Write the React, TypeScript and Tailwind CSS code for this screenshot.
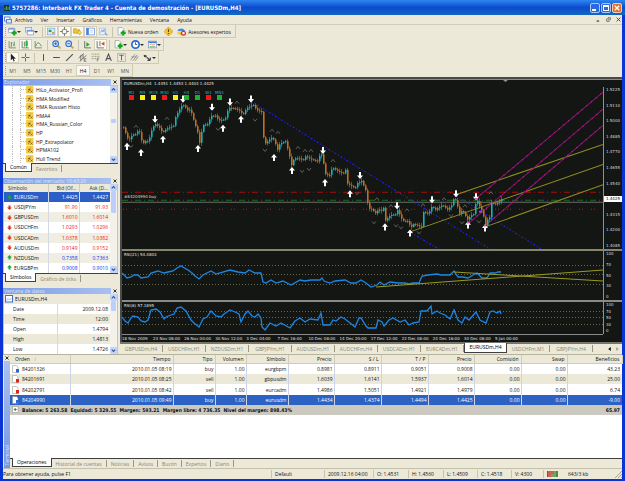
import React from "react";
import type { ReactNode } from "react";

type Pt = [number, number];

/* ---------- chart data ---------- */

const PRICE: Pt[] = [
  [122, 127], [125, 134], [128, 141], [131, 135], [134, 132], [139, 133], [142, 144], [145, 140], [149, 139], [152, 128],
  [155, 124], [160, 127], [163, 133], [166, 129], [173, 124], [177, 114], [182, 104], [186, 107], [191, 114], [194, 123],
  [197, 131], [199, 141], [203, 126], [207, 124], [210, 116], [212, 113], [218, 121], [224, 118], [229, 109], [235, 108],
  [239, 109], [242, 117], [246, 108], [251, 104], [256, 111], [262, 111], [263, 136], [266, 144], [270, 139], [272, 137],
  [275, 143], [277, 148], [281, 144], [285, 141], [288, 151], [291, 163], [295, 159], [298, 158], [305, 158], [310, 159],
  [317, 159], [322, 154], [324, 173], [328, 174], [333, 169], [338, 171], [345, 171], [347, 184], [353, 186], [358, 184],
  [361, 181], [365, 189], [367, 201], [370, 209], [375, 213], [378, 208], [383, 209], [385, 221], [390, 214], [397, 211],
  [402, 220], [407, 219], [410, 229], [413, 224], [421, 224], [422, 213], [428, 213], [432, 203], [435, 211], [442, 204],
  [450, 209], [453, 199], [456, 199], [458, 211], [463, 213], [467, 219], [470, 214], [474, 211], [476, 199], [479, 206],
  [482, 211], [485, 223], [489, 218], [491, 203], [495, 203], [499, 199], [502, 201],
];

const RSI_SLOW: Pt[] = [
  [122, 273], [127, 278], [131, 277], [134, 275], [138, 275], [141, 278], [148, 277], [151, 273], [158, 271], [164, 273],
  [168, 272], [173, 271], [177, 268], [181, 266], [188, 270], [192, 273], [195, 276], [199, 279], [203, 275], [211, 271],
  [216, 274], [230, 270], [238, 272], [245, 273], [249, 270], [255, 273], [261, 273], [263, 282], [266, 283], [271, 280],
  [276, 283], [283, 281], [291, 285], [300, 280], [305, 281], [311, 280], [320, 280], [322, 278], [324, 281], [330, 283],
  [335, 281], [345, 280], [351, 283], [356, 283], [361, 280], [366, 283], [371, 287], [377, 285], [380, 282], [384, 285],
  [390, 282], [398, 283], [405, 283], [409, 284], [413, 283], [419, 283], [422, 276], [428, 275], [437, 274], [441, 275],
  [450, 275], [454, 271], [458, 277], [463, 277], [468, 278], [473, 275], [477, 273], [482, 278], [487, 278], [490, 273],
  [495, 273], [498, 272], [501, 272],
];

const RSI_FAST: Pt[] = [
  [122, 317], [125, 321], [128, 323], [131, 318], [133, 316], [138, 317], [141, 321], [145, 322], [148, 320], [151, 310],
  [156, 309], [160, 312], [164, 319], [166, 317], [171, 315], [174, 314], [177, 308], [181, 307], [186, 311], [191, 320],
  [194, 323], [199, 327], [203, 319], [207, 317], [211, 311], [216, 316], [221, 317], [224, 314], [230, 310], [235, 312],
  [239, 314], [241, 322], [245, 314], [248, 311], [252, 316], [255, 317], [258, 314], [261, 318], [262, 327], [265, 330],
  [270, 323], [276, 326], [281, 323], [290, 328], [295, 321], [300, 318], [305, 322], [310, 319], [318, 320], [321, 313],
  [323, 325], [330, 325], [333, 320], [336, 321], [341, 317], [345, 319], [350, 323], [355, 327], [359, 318], [361, 318],
  [366, 326], [368, 328], [376, 328], [378, 320], [382, 322], [384, 326], [389, 320], [393, 318], [400, 322], [405, 320],
  [409, 325], [413, 323], [419, 322], [421, 311], [427, 311], [431, 306], [432, 314], [437, 311], [440, 313], [445, 315],
  [450, 319], [454, 310], [458, 320], [462, 323], [465, 317], [469, 320], [476, 312], [480, 320], [486, 323], [490, 312],
  [493, 311], [497, 313], [500, 311], [501, 314],
];

const DOWN_ARROWS: Pt[] = [[155, 119], [183, 99], [212, 107], [230, 102], [251, 99], [323, 150], [360, 175], [397, 205], [432, 199], [456, 193], [476, 196]];
const UP_ARROWS: Pt[] = [[127, 146], [141, 152], [163, 139], [198, 148], [223, 128], [241, 119], [274, 157], [292, 170], [325, 182], [350, 193], [385, 226], [410, 232], [468, 224], [485, 227]];
const PEAKS: Pt[] = [[136, 126], [167, 118], [237, 102], [272, 130], [278, 132], [298, 147], [305, 150], [311, 150], [333, 160], [377, 198], [391, 205], [407, 209], [423, 204], [444, 198], [465, 205], [491, 192]];
const TROUGHS: Pt[] = [[131, 146], [218, 129], [255, 120], [265, 150], [302, 171], [309, 169], [357, 193], [374, 222], [396, 225], [401, 227], [419, 232], [451, 215], [462, 222], [479, 221]];

const PRICE_LABELS = ["1.5225", "1.5110", "1.5000", "1.4885", "1.4770", "1.4655", "1.4540", "1.4425", "1.4315", "1.4200", "1.4085"];
const RSI_LABELS = ["100", "70", "50", "30", "0"];
const TIMES = ["18 Nov 2009", "23 Nov 08:00", "26 Nov 00:00", "30 Nov 12:00", "3 Dec 04:00", "7 Dec 16:00", "10 Dec 08:00", "14 Dec 20:00", "17 Dec 12:00", "22 Dec 08:00", "24 Dec 16:00", "30 Dec 08:00", "5 Jan 00:00"];

function valueAt(points: Pt[], x: number): number {
  for (let i = 1; i < points.length; i++) {
    const [x0, y0] = points[i - 1];
    const [x1, y1] = points[i];
    if (x <= x1) return y0 + ((y1 - y0) * (x - x0)) / (x1 - x0);
  }
  return points[points.length - 1][1];
}

function Candles() {
  const bars: ReactNode[] = [];
  let open = valueAt(PRICE, 122);
  for (let i = 0; i < 190; i++) {
    const x = 123 + i * 2;
    if (x > 502) break;
    const noise = ((i * 7919) % 13) / 13 - 0.5;
    const close = valueAt(PRICE, x) + noise * 4;
    const color = close <= open ? "#14b4ba" : "#c0701e";
    const top = Math.min(open, close);
    const bottom = Math.max(open, close);
    const reach = 1 + ((i * 31) % 5) / 2;
    bars.push(
      <g key={x} fill={color}>
        <rect x={x} y={top - reach} width="1" height={bottom - top + reach * 2} opacity="0.6" />
        <rect x={x} y={top} width="1.6" height={Math.max(1, bottom - top)} />
      </g>,
    );
    open = close;
  }
  return <>{bars}</>;
}

const toPoints = (points: Pt[]) => points.map((p) => p.join(",")).join(" ");

const SIGNALS: [string, string][] = [
  ["M1", "#f01818"], ["M5", "#f8f010"], ["M15", "#f8f010"], ["M30", "#f01818"], ["H1", "#f8f010"],
  ["H4", "#20b030"], ["D1", "#20b030"], ["W1", "#f01818"], ["MN1", "#20b030"],
];

function PricePlot() {
  return (
    <svg viewBox="122 80 481 168" preserveAspectRatio="none" className="block h-full w-full" aria-label="EURUSDm H4">
      <path d="M122 191.500H603" stroke="#a80c0c" strokeDasharray="6 3 1 3" />
      <path d="M122 199.500H603" stroke="#1d6a24" strokeDasharray="6 3 1 3" />
      <path d="M122 201.500H603" stroke="#6c6c6c" />
      <path d="M123 208.500H603" stroke="#d01010" strokeWidth="1.200" strokeDasharray="1 2 1 8" />
      <g stroke="#2020e8" strokeWidth="1.200" strokeDasharray="2 2 1 2" fill="none">
        <path d="M251 101L490 248" />
        <path d="M411 232L439 248" />
        <path d="M456 195L541 248" />
      </g>
      <g stroke="#8f8f20" fill="none">
        <path d="M456 194L603 144" />
        <path d="M410 231L603 164" />
        <path d="M485 226L603 184" />
      </g>
      <g stroke="#8c1278" fill="none">
        <path d="M476 198L603 92" />
        <path d="M468 223L603 109" />
        <path d="M485 225L603 125" />
      </g>
      <g stroke="#d82090" strokeDasharray="1 5" fill="none">
        <path d="M476 198L603 92" />
        <path d="M468 223L603 109" />
        <path d="M485 225L603 125" />
      </g>
      <Candles />
      <g fill="none" stroke="#6f6f72" strokeWidth="0.8">
        {PEAKS.map(([x, y]) => <path key={x} d={`M${x - 2} ${y + 1.5}L${x} ${y - 1}L${x + 2} ${y + 1.5}`} />)}
        {TROUGHS.map(([x, y]) => <path key={x} d={`M${x - 2} ${y - 1.5}L${x} ${y + 1}L${x + 2} ${y - 1.5}`} />)}
      </g>
      <g fill="#ffffff">
        {DOWN_ARROWS.map(([x, y]) => <path key={x} d={`M${x - 1} ${y - 3.5}h2v3.500h2l-3 3.500l-3 -3.500h2z`} />)}
        {UP_ARROWS.map(([x, y]) => <path key={x} d={`M${x - 1} ${y + 3.5}h2v-3.500h2l-3 -3.500l-3 3.500h2z`} />)}
      </g>
      <g fill="#e040d0">
        <circle cx="468" cy="222" r="1" /><circle cx="485" cy="225" r="1" /><circle cx="476" cy="198" r="1" /><circle cx="480" cy="211" r="1" />
      </g>
      <path d="M503 80h5l-2.500 2z" fill="#8d93a5" />
    </svg>
  );
}

function RsiPlot({ box, levels, points, children }: { box: string; levels: number[]; points: Pt[]; children?: ReactNode }) {
  return (
    <svg viewBox={box} preserveAspectRatio="none" className="block h-full w-full">
      {levels.map((y) => <path key={y} d={`M122 ${y}.5H603`} stroke="#66664a" strokeDasharray="1 2" />)}
      <polyline points={toPoints(points)} fill="none" stroke="#1c86e4" strokeWidth="1.300" />
      {children}
    </svg>
  );
}

function Scale({ labels, current }: { labels: string[]; current?: string }) {
  return (
    <div className="flex h-full w-[19px] flex-col justify-between border-l border-[#8a90a0] text-[4px] leading-[6px] text-[#d8d8d8]">
      {labels.map((l) => (
        <span key={l} className={l === current ? "bg-white pl-[2px] text-black" : "pl-[2px]"}>{l}</span>
      ))}
    </div>
  );
}

function Chart() {
  return (
    <div className="flex min-h-0 flex-1 flex-col border-t-2 border-l-2 border-[#4a4a4a] bg-[#141613] font-['DejaVu_Sans',sans-serif]">
      <div className="flex min-h-0 flex-1">
        <div className="relative min-w-0 flex-1 border-t border-[#8a8a8a]">
          <PricePlot />
          <div className="absolute top-0 left-[2px] text-[4px] leading-[7px] whitespace-pre text-[#e4e4e4]">EURUSDm,H4  1.4451 1.4453 1.4403 1.4425</div>
          <div className="absolute top-[10px] left-[4px] flex">
            {SIGNALS.map(([name, color]) => (
              <div key={name} className="flex w-[11px] flex-col items-center text-[4px] leading-[5px] text-[#18b8c0]">
                {name}
                <span className="size-[5px]" style={{ backgroundColor: color }} />
              </div>
            ))}
          </div>
          <div className="absolute top-[114px] left-[2px] text-[4px] leading-[6px] text-[#dcdcdc]">#84204990 buy</div>
        </div>
        <div className="border-t border-[#8a8a8a] pt-[7px]"><Scale labels={PRICE_LABELS} current="1.4425" /></div>
      </div>
      <div className="flex h-[51px] border-t-2 border-[#86866e]">
        <div className="relative min-w-0 flex-1">
          <RsiPlot box="122 251 481 49" levels={[265, 274, 284]} points={RSI_SLOW}>
            <g stroke="#9a9a22" fill="none">
              <path d="M376 287L603 270" />
              <path d="M454 272L603 281" />
            </g>
          </RsiPlot>
          <div className="absolute top-[1px] left-[2px] text-[4px] leading-[6px] text-[#e4e4e4]">RSI(21) 54.4803</div>
        </div>
        <Scale labels={RSI_LABELS} />
      </div>
      <div className="flex h-[34px] border-t-2 border-[#8a8a8a]">
        <div className="relative min-w-0 flex-1">
          <RsiPlot box="122 302 481 32" levels={[311, 317, 324]} points={RSI_FAST} />
          <div className="absolute top-[1px] left-[2px] text-[4px] leading-[6px] text-[#e4e4e4]">RSI(6) 57.1895</div>
        </div>
        <Scale labels={RSI_LABELS} />
      </div>
      <div className="mr-[19px] h-[8px] border-t border-[#8a8a8a]">
        <div className="grid w-[84%] grid-cols-13 text-[4px] leading-[7px] text-[#e0e0e0]">
          {TIMES.map((t) => <span key={t} className="overflow-visible whitespace-nowrap">{t}</span>)}
        </div>
      </div>
    </div>
  );
}

/* ---------- icons ---------- */

type IconName =
  | "newChart" | "profiles" | "market" | "target" | "navigator" | "terminal" | "tester" | "order" | "meta" | "expert"
  | "bars" | "candles" | "line" | "zoomIn" | "zoomOut" | "scroll" | "shift" | "indicators" | "clock" | "template"
  | "cursor" | "cross" | "vline" | "hline" | "trend" | "channel" | "fibo" | "text" | "label" | "pitch" | "objects";

const ICONS: Record<IconName, ReactNode> = {
  newChart: <><rect x="1" y="2" width="11" height="8" rx="1" fill="#fff" stroke="#5a83c8" /><path d="M1 3.500h11" stroke="#5a83c8" strokeWidth="2" /><path d="M11 6v9M6.500 10.500h9" stroke="#16a820" strokeWidth="4" /></>,
  profiles: <><rect x="1" y="1" width="11" height="8" fill="#dfe9fa" stroke="#6a90d0" /><rect x="4" y="6" width="11" height="8" fill="#fff" stroke="#5a83c8" /><path d="M4 7h11" stroke="#5a83c8" strokeWidth="2" /></>,
  market: <><rect x="1" y="2" width="13" height="12" fill="#d9e9fb" stroke="#5a94d8" /><path d="M3 5h5v4H3z" fill="#28a838" /><path d="M9 9h4v3H9z" fill="#d89030" /></>,
  target: <><circle cx="8" cy="8" r="4.500" fill="none" stroke="#70706c" strokeWidth="1.500" /><path d="M8 0v5M8 11v5M0 8h5M11 8h5" stroke="#70706c" strokeWidth="1.500" /></>,
  navigator: <><path d="M1 3h5l2 2h4v6H1z" fill="#f4c430" stroke="#b88a18" /><path d="M8 9l3-3 4 4-3 4z" fill="#f9dd58" stroke="#b88a18" /></>,
  terminal: <><rect x="1" y="2" width="14" height="12" fill="#fff" stroke="#3a6cc8" /><rect x="1" y="2" width="4" height="12" fill="#4a80d8" /><path d="M7 6h6M7 9h6" stroke="#a8b8d8" /></>,
  tester: <><rect x="1" y="2" width="11" height="11" fill="#eef3fc" stroke="#9ab0d8" /><path d="M3 10l2-5 2 4 2-5 2 5" fill="none" stroke="#4a78c8" /><path d="M10 10l5 5" stroke="#8a98b8" strokeWidth="2" /></>,
  order: <><path d="M2 1h7l3 3v10H2z" fill="#fff" stroke="#7a8aa8" /><path d="M11 6v9M6.500 10.500h9" stroke="#16a820" strokeWidth="4" /></>,
  meta: <><path d="M8 0l8 8-8 8-8-8z" fill="#f6c62c" stroke="#b8861a" /><path d="M8 4v5M8 10.500v2" stroke="#6a4c08" strokeWidth="2" /></>,
  expert: <><path d="M1 7c0-6 13-6 13 0z" fill="#4a88e0" /><path d="M1 8h12v4l-6 3-6-3z" fill="#f2c848" /><circle cx="11.500" cy="11" r="4.500" fill="#e02818" /><rect x="9.500" y="9" width="4" height="4" fill="#fff" /></>,
  bars: <><path d="M2 2v12h12" fill="none" stroke="#78786c" strokeWidth="1.500" /><path d="M6 4v8M6 5h2M11 3v8M9 9h2" stroke="#3c8c48" strokeWidth="1.500" /></>,
  candles: <><path d="M2 2v12h12M6 3v9" fill="none" stroke="#58785c" strokeWidth="1.500" /><path d="M10 0v14" stroke="#188828" /><rect x="8" y="2" width="4" height="9" fill="#20b838" /></>,
  line: <><path d="M2 2v12h12" fill="none" stroke="#78786c" strokeWidth="1.500" /><path d="M3 11c3-8 6-8 10 0" fill="none" stroke="#3c8c48" strokeWidth="1.500" /></>,
  zoomIn: <><path d="M9 9l6 6" stroke="#d8a030" strokeWidth="3" /><circle cx="6.500" cy="6.500" r="5" fill="#d6e8fc" stroke="#3470d0" strokeWidth="2" /><path d="M4 6.500h5M6.500 4v5" stroke="#2058c0" strokeWidth="1.500" /></>,
  zoomOut: <><path d="M9 9l6 6" stroke="#d8a030" strokeWidth="3" /><circle cx="6.500" cy="6.500" r="5" fill="#d6e8fc" stroke="#3470d0" strokeWidth="2" /><path d="M4 6.500h5" stroke="#2058c0" strokeWidth="1.500" /></>,
  scroll: <><path d="M3 2v12h11" fill="none" stroke="#60605a" strokeWidth="1.500" /><path d="M6 4l6 4-6 4z" fill="#20a838" /></>,
  shift: <><path d="M2 2v12h12M7 2v9" fill="none" stroke="#60605a" strokeWidth="1.500" /><path d="M15 3v7L9 6.500z" fill="#c84830" /></>,
  indicators: <><path d="M2 1h7l3 3v10H2z" fill="#fff" stroke="#6a8a78" /><path d="M11 6v9M6.500 10.500h9" stroke="#16a820" strokeWidth="4" /></>,
  clock: <><circle cx="8" cy="8" r="6.500" fill="#fff" stroke="#2468d8" strokeWidth="3" /><path d="M8 4v4h3" fill="none" stroke="#30486c" strokeWidth="1.500" /></>,
  template: <><rect x="1" y="2" width="14" height="12" fill="#fff" stroke="#4a80d0" /><path d="M1 4h14" stroke="#4a80d0" strokeWidth="3" /><path d="M3 9l3-2 3 2 4-2" fill="none" stroke="#c04838" /><path d="M3 12h10" stroke="#48a058" strokeWidth="1.500" /></>,
  cursor: <path d="M5 1v12l3-3 2 5 2-1-2-4h4z" fill="#202020" />,
  cross: <path d="M8 1v6M8 9v6M1 8h6M9 8h6" stroke="#505050" strokeWidth="1.500" />,
  vline: <path d="M8 2v12" stroke="#505050" strokeWidth="1.800" />,
  hline: <path d="M2 8h12" stroke="#505050" strokeWidth="1.800" />,
  trend: <path d="M2 14L14 2" stroke="#505050" strokeWidth="1.800" />,
  channel: <><path d="M1 9l9-8M3 15L15 4M5 4v9M9 2v8" stroke="#505050" strokeWidth="1.300" /><path d="M11 10h4M11 10v5M11 12.500h3M11 15h4" fill="none" stroke="#505050" /></>,
  fibo: <><path d="M1 2h14M1 6h14M1 10h8" stroke="#80805c" strokeWidth="1.300" strokeDasharray="2 1" /><path d="M11 9h4M11 9v6M11 12h3" stroke="#505050" /></>,
  text: <path d="M3 14L8 2l5 12M5 10h6" fill="none" stroke="#505050" strokeWidth="2" />,
  label: <><rect x="1" y="1" width="14" height="14" fill="none" stroke="#707068" strokeDasharray="2 1" /><path d="M4 4h8M8 4v9" stroke="#505050" strokeWidth="1.500" /></>,
  pitch: <path d="M1 13L9 2M5 14l8-11M9 14l6-8M2 7h10" stroke="#80807c" strokeWidth="1.300" />,
  objects: <><path d="M1 3l5 1 1 4-5-1z" fill="#404040" /><path d="M7 8l6 5M13 13h-5M13 13V8" stroke="#404040" strokeWidth="2" fill="none" /></>,
};

function Icon({ name }: { name: IconName }) {
  return <svg viewBox="0 0 16 16" className="size-[9px] shrink-0" aria-hidden="true">{ICONS[name]}</svg>;
}

function Tool({ name, on, menu, label }: { name: IconName; on?: boolean; menu?: boolean; label?: string }) {
  return (
    <button
      type="button"
      aria-label={label ?? name}
      className={`flex h-[11px] shrink-0 items-center px-[1px] whitespace-nowrap ${on ? "border border-[#d4d0bc] bg-[#faf9f4]" : "border border-transparent"}`}
    >
      <Icon name={name} />
      {label && <span className="px-[2px]">{label}</span>}
      {menu && <span className="size-0 border-x-2 border-t-2 border-x-transparent border-t-[#303030]" />}
    </button>
  );
}

function Divider() {
  return <span className="mx-[2px] h-[10px] w-px shrink-0 bg-[#c8c4b0]" />;
}

function ToolBar({ children }: { children: ReactNode }) {
  return (
    <div className="flex h-[13px] w-max shrink-0 items-center border-r border-b border-[#cfcab2] pt-px pl-[2px]">
      <span className="h-[9px] border-l border-dotted border-[#a8a48c]" />
      {children}
    </div>
  );
}

/* ---------- side panels ---------- */

function PanelTitle({ children }: { children: ReactNode }) {
  return (
    <div className="flex h-[7px] items-center">
      <div className="h-[6px] min-w-0 flex-1 overflow-hidden bg-linear-to-r from-[#7c9ce4] to-[#a9c0f0] pl-px leading-[6px] whitespace-nowrap text-[#dfe8fb]">{children}</div>
      <button type="button" aria-label="Cerrar" className="flex h-[6px] w-[7px] items-center justify-center">
        <svg viewBox="0 0 8 8" className="size-[4px]"><path d="M1 1l6 6M7 1L1 7" stroke="#202020" strokeWidth="1.800" /></svg>
      </button>
    </div>
  );
}

function ScrollBar({ thumb }: { thumb: string }) {
  return (
    <div className="flex w-[7px] shrink-0 flex-col bg-[#f3f1ea]">
      <Arrow d="M2 5l2-2 2 2" />
      <div className={`mx-px rounded-[1px] bg-[#bccffa] ${thumb}`} />
      <div className="flex-1" />
      <Arrow d="M2 3l2 2 2-2" />
    </div>
  );
}

function Arrow({ d }: { d: string }) {
  return (
    <svg viewBox="0 0 8 8" className="h-[7px] w-[7px] shrink-0 rounded-[1px] bg-[#c3d4fb]">
      <path d={d} fill="none" stroke="#3a5590" strokeWidth="1.300" />
    </svg>
  );
}

function Tabs({ names }: { names: string[] }) {
  return (
    <div role="tablist" className="flex h-[10px] shrink-0 items-start border-t border-[#404040] pl-[2px]">
      {names.map((n, i) => (
        <button
          key={n}
          type="button"
          role="tab"
          aria-selected={i === 0}
          className={i === 0
            ? "-mt-px h-[9px] border-x border-b border-[#404040] bg-white px-[4px] leading-[8px] text-black"
            : "mt-px h-[7px] border-r border-[#9a9680] px-[4px] leading-[6px] text-[#8a8674]"}
        >
          {n}
        </button>
      ))}
    </div>
  );
}

const INDICATORS = ["HiLo_Activator_Profi", "HMA Modified", "HMA Russian Histo", "HMA4", "HMA_Russian_Color", "HP", "HP_Extrapolator", "HPMA102", "Hull Trend"];

function Navigator() {
  return (
    <section className="flex min-h-0 flex-1 flex-col">
      <PanelTitle>Explorador</PanelTitle>
      <div className="flex min-h-0 flex-1 border border-b-0 border-[#c8c4b4] bg-white">
        <ul className="grid min-w-0 flex-1 auto-rows-fr pl-[8px]">
          {INDICATORS.map((n) => (
            <li key={n} className="flex items-center border-l border-dotted border-[#c0c0b8] pl-[7px]">
              <span className="h-full w-[6px] border-l border-dotted border-[#c0c0b8]">
                <span className="block h-1/2 border-b border-dotted border-[#c0c0b8]" />
              </span>
              <svg viewBox="0 0 16 16" className="mr-[2px] size-[8px] shrink-0">
                <rect x="0" y="0" width="15" height="15" rx="2" fill="#f2cc48" />
                <path d="M4 12c3 0 2-8 5-8M4 7h5M9 9l4 4M13 9l-4 4" fill="none" stroke="#7a5c10" strokeWidth="1.500" />
              </svg>
              <span className="whitespace-nowrap">{n}</span>
            </li>
          ))}
        </ul>
        <ScrollBar thumb="mt-[26px] h-[4px]" />
      </div>
      <Tabs names={["Común", "Favoritos"]} />
    </section>
  );
}

const QUOTES: [string, string, string, boolean][] = [
  ["EURUSDm", "1.4425", "1.4427", true], ["USDJPYm", "91.90", "91.93", false], ["GBPUSDm", "1.6010", "1.6014", false],
  ["USDCHFm", "1.0293", "1.0296", false], ["USDCADm", "1.0378", "1.0382", false], ["AUDUSDm", "0.9149", "0.9152", false],
  ["NZDUSDm", "0.7358", "0.7363", true], ["EURGBPm", "0.9008", "0.9010", true],
];

function MarketWatch() {
  return (
    <section className="flex h-[106px] shrink-0 flex-col">
      <PanelTitle>Observación del mercado: 10:43:26</PanelTitle>
      <div className="flex min-h-0 flex-1 border-x border-[#c8c4b4] bg-white">
        <table className="h-full min-w-0 flex-1 table-fixed border-collapse">
          <colgroup><col className="w-[44px]" /><col className="w-[31px]" /><col className="w-[31px]" /></colgroup>
          <thead>
            <tr className="bg-[#ece9d8] text-[#303030]">
              <th className="border-r border-[#cfccba] p-0 pl-[4px] text-left font-normal">Símbolo</th>
              <th className="border-r border-[#cfccba] p-0 pr-[2px] text-right font-normal whitespace-nowrap">Bid (Of…</th>
              <th className="p-0 pr-[2px] text-right font-normal whitespace-nowrap">Ask (D…</th>
            </tr>
          </thead>
          <tbody>
            {QUOTES.map(([s, bid, ask, up], i) => {
              const tone = i === 0 ? "text-white" : up ? "text-[#1030f0]" : "text-[#f02010]";
              return (
                <tr key={s} className={i === 0 ? "bg-[#2b5fc6] text-white" : i % 2 ? "bg-white" : "bg-[#f0eee2]"}>
                  <td className="border-r border-[#d4d8e4] p-0">
                    <span className="flex items-center gap-[2px] pl-[3px]">
                      <svg viewBox="0 0 10 10" className="size-[5px] shrink-0"><path d={up ? "M5 0l5 5H7v4H3V5H0z" : "M5 10l5-5H7V1H3v4H0z"} fill={up ? "#18a838" : "#d83418"} /></svg>
                      {s}
                    </span>
                  </td>
                  <td className={`border-r border-[#d4d8e4] p-0 pr-px text-right ${tone}`}>{bid}</td>
                  <td className={`p-0 pr-[2px] text-right ${tone}`}>{ask}</td>
                </tr>
              );
            })}
          </tbody>
        </table>
        <ScrollBar thumb="h-[22px]" />
      </div>
      <Tabs names={["Símbolos", "Gráfico de ticks"]} />
    </section>
  );
}

const DATA: [string, string][] = [["Date", "2009.12.08"], ["Time", "12:00"], ["Open", "1.4794"], ["High", "1.4813"], ["Low", "1.4726"]];

function DataWindow() {
  return (
    <section className="flex h-[67px] shrink-0 flex-col">
      <PanelTitle>Ventana de datos</PanelTitle>
      <div className="flex min-h-0 flex-1 border-x border-[#c8c4b4] bg-white">
        <div className="flex min-w-0 flex-1 flex-col">
          <div className="flex h-[10px] items-center gap-[2px] bg-[#ece9d8] pl-px">
            <svg viewBox="0 0 16 16" className="size-[8px]"><rect x="1" y="1" width="14" height="13" fill="#fff" stroke="#3a70d0" strokeWidth="2" /><path d="M3 11l3-4 3 3 4-4" fill="none" stroke="#3a70d0" /></svg>
            EURUSDm,H4
          </div>
          <table className="w-full flex-1 table-fixed border-collapse">
            <tbody>
              {DATA.map(([k, v], i) => (
                <tr key={k} className={i % 2 ? "bg-[#ece9d8]" : "bg-white"}>
                  <th className="border-r border-[#d4d8e4] p-0 pl-[9px] text-left font-normal">{k}</th>
                  <td className="p-0 pr-[2px] text-right">{v}</td>
                </tr>
              ))}
            </tbody>
          </table>
        </div>
        <ScrollBar thumb="h-[10px]" />
      </div>
    </section>
  );
}

/* ---------- chart tabs and terminal ---------- */

const CHARTS = ["GBPUSDm,H4", "USDCHFm,H1", "NZDUSDm,H1", "GBPJPYm,H1", "AUDUSDm,H1", "AUDCHFm,H4", "USDCADm,H1", "EURCADm,H1", "EURUSDm,H4", "USDCHFm,M1", "GBPJPYm,H4"];

function ChartTabs() {
  return (
    <div role="tablist" className="flex h-[12px] shrink-0 border-t-2 border-[#77756c]">
      {CHARTS.map((c) => (
        <button
          key={c}
          type="button"
          role="tab"
          aria-selected={c === "EURUSDm,H4"}
          className={c === "EURUSDm,H4"
            ? "-mt-px h-[10px] w-[43px] shrink-0 border-x border-b border-[#404040] bg-white leading-[9px] text-black"
            : "mt-px h-[7px] w-[43px] shrink-0 border-r border-[#9a9680] leading-[6px] text-[#8a8674]"}
        >
          {c}
        </button>
      ))}
      <div className="ml-auto flex items-center gap-[5px] pr-[3px]">
        <button type="button" aria-label="Anterior"><svg viewBox="0 0 4 6" className="h-[4px] w-[3px]"><path d="M4 0v6L0 3z" fill="#101010" /></svg></button>
        <button type="button" aria-label="Siguiente"><svg viewBox="0 0 4 6" className="h-[4px] w-[3px]"><path d="M0 0v6l4-3z" fill="#a8a490" /></svg></button>
      </div>
    </div>
  );
}

const HEADERS = ["Tiempo", "Tipo", "Volumen", "Símbolo", "Precio", "S / L", "T / P", "Precio", "Comisión", "Swap", "Beneficios"];
const ORDERS = [
  ["84201326", "2010.01.05 08:19", "buy", "1.00", "eurgbpm", "0.8981", "0.8911", "0.9051", "0.9008", "0.00", "0.00", "43.23"],
  ["84201691", "2010.01.05 08:25", "sell", "1.00", "gbpusdm", "1.6039", "1.6141", "1.5937", "1.6014", "0.00", "0.00", "25.00"],
  ["84202791", "2010.01.05 08:42", "sell", "1.00", "eurcadm", "1.4986", "1.5051", "1.4921", "1.4979", "0.00", "0.00", "6.74"],
  ["84204990", "2010.01.05 09:49", "buy", "1.00", "eurusdm", "1.4434", "1.4374", "1.4494", "1.4425", "0.00", "0.00", "-9.00"],
];

function Terminal() {
  return (
    <section className="flex h-[114px] shrink-0 border-t border-[#b8b49c]">
      <div className="flex w-[7px] shrink-0 flex-col items-center">
        <button type="button" aria-label="Cerrar terminal" className="flex h-[6px] items-center">
          <svg viewBox="0 0 8 8" className="size-[4px]"><path d="M1 1l6 6M7 1L1 7" stroke="#202020" strokeWidth="1.800" /></svg>
        </button>
        <div className="flex w-[6px] flex-1 items-end justify-center bg-linear-to-b from-[#a9c0f0] to-[#7596e2] pb-[2px] text-[#dfe8fb]">
          <span className="rotate-180 leading-[6px] [writing-mode:vertical-rl]">Terminal</span>
        </div>
      </div>
      <div className="flex min-w-0 flex-1 flex-col">
        <div className="min-h-0 flex-1 bg-white">
          <table className="h-[60px] w-full table-fixed border-collapse">
            <colgroup>
              <col className="w-[60px]" /><col className="w-[103px]" /><col className="w-[42px]" /><col className="w-[31px]" />
              <col className="w-[42px]" /><col className="w-[46px]" /><col className="w-[47px]" /><col className="w-[47px]" />
              <col className="w-[46px]" /><col className="w-[47px]" /><col className="w-[46px]" /><col className="w-[55px]" />
            </colgroup>
            <thead>
              <tr className="bg-[#ece9d8]">
                <th className="border-r border-b border-[#cfccba] p-0 pl-[5px] text-left font-normal">
                  Orden <span className="pl-[3px] text-[#a8a490]">/</span>
                </th>
                {HEADERS.map((h, i) => <th key={i} className="border-r border-b border-[#cfccba] p-0 pr-[2px] text-right font-normal">{h}</th>)}
              </tr>
            </thead>
            <tbody>
              {ORDERS.map((row, r) => (
                <tr key={row[0]} className={r === 3 ? "bg-[#2b62c4] text-white" : r === 1 ? "bg-[#ece9d8]" : "bg-white"}>
                  {row.map((cell, i) => i === 0 ? (
                    <td key={i} className="border-r border-[#ccd4e6] p-0">
                      <span className="flex items-center gap-[3px] pl-[2px]">
                        <svg viewBox="0 0 14 16" className="h-[8px] w-[7px]">
                          <path d="M1 1h8l3 3v11H1z" fill="#fff" stroke="#8a8a88" />
                          <path d="M8 8h6v7H8z" fill={row[2] === "buy" ? "#2c68d0" : "#d82818"} />
                        </svg>
                        {cell}
                      </span>
                    </td>
                  ) : (
                    <td key={i} className="border-r border-[#ccd4e6] p-0 pr-px text-right last:border-r-0 last:pr-[2px]">{cell}</td>
                  ))}
                </tr>
              ))}
              <tr className="bg-[#cbc9c0] font-['DejaVu_Sans_Condensed','DejaVu_Sans',sans-serif] font-bold">
                <td colSpan={11} className="p-0">
                  <span className="flex items-center gap-[3px] pl-[2px] whitespace-pre">
                    <svg viewBox="0 0 14 14" className="size-[7px]"><rect x="1" y="1" width="11" height="12" fill="#fff" stroke="#8a8a88" /><path d="M6.500 4v6M3.500 7h6" stroke="#18a028" strokeWidth="2" /></svg>
                    Balance: 5 263.58  Equidad: 5 329.55  Margen: 593.21  Margen libre: 4 736.35  Nivel del margen: 898.43%
                  </span>
                </td>
                <td className="p-0 pr-[2px] text-right">65.97</td>
              </tr>
            </tbody>
          </table>
        </div>
        <Tabs names={["Operaciones", "Historial de cuentas", "Noticias", "Avisos", "Buzón", "Expertos", "Diario"]} />
      </div>
    </section>
  );
}

function StatusBar() {
  const cell = "border-l border-[#c8c4b0] pl-[3px] h-[8px]";
  return (
    <footer className="flex h-[11px] shrink-0 items-center border-t border-[#c4c0aa] leading-[8px] whitespace-nowrap">
      <span className="min-w-0 flex-1">Para obtener ayuda, pulse F1</span>
      <span className={`w-[53px] ${cell}`}>Default</span>
      <span className={`w-[49px] ${cell}`}>2009.12.16 04:00</span>
      <span className={`w-[35px] ${cell}`}>O: 1.4531</span>
      <span className={`w-[35px] ${cell}`}>H: 1.4560</span>
      <span className={`w-[34px] ${cell}`}>L: 1.4509</span>
      <span className={`w-[34px] ${cell}`}>C: 1.4518</span>
      <span className={`w-[32px] ${cell}`}>V: 4300</span>
      <span className={`flex w-[25px] items-center ${cell}`}>
        <svg viewBox="0 0 11 6" className="h-[6px] w-[11px]"><path d="M0 0h11v6H0z" fill="#4a9038" /><path d="M0 0h7v3H4v3H0z" fill="#c83028" /><path d="M2 0v6M4 0v6M6 0v6M8 0v6" stroke="#ece9d8" strokeWidth="0.500" /></svg>
      </span>
      <span className="w-[46px]">643/3 kb</span>
      <svg viewBox="0 0 8 8" className="size-[8px]"><path d="M1 8l7-7M4 8l4-4M7 8l1-1" stroke="#a8a490" /></svg>
    </footer>
  );
}

/* ---------- window ---------- */

function TitleBar() {
  return (
    <header className="flex h-[15px] shrink-0 items-center gap-[2px] bg-linear-to-b from-[#2f86ee] via-[#1048d0] to-[#1468c0] pr-[3px] pl-[4px]">
      <svg viewBox="0 0 12 12" className="size-[6px]"><path d="M0 0h12v12H0z" fill="#183028" /><path d="M2 10V5M5 10V2M8 10V4M11 10V1" stroke="#58c070" strokeWidth="1.500" /></svg>
      <h1 className="min-w-0 flex-1 overflow-hidden font-['DejaVu_Sans_Condensed','DejaVu_Sans',sans-serif] text-[6px] leading-[10px] font-bold whitespace-nowrap text-white">
        5757286: Interbank FX Trader 4 - Cuenta de demostración - [EURUSDm,H4]
      </h1>
      <div className="flex gap-px">
        <button type="button" aria-label="Minimizar" className="flex size-[10px] items-end rounded-[2px] border border-[#a9c8f8] bg-[#2c68e0] p-[1px]"><span className="h-[2px] w-[4px] bg-white" /></button>
        <button type="button" aria-label="Restaurar" className="flex size-[10px] items-center justify-center rounded-[2px] border border-[#a9c8f8] bg-[#2c68e0]"><span className="size-[6px] border border-t-2 border-white" /></button>
        <button type="button" aria-label="Cerrar" className="flex size-[10px] items-center justify-center rounded-[2px] border border-[#f4d0b8] bg-[#e0702c]">
          <svg viewBox="0 0 8 8" className="size-[6px]"><path d="M1 1l6 6M7 1L1 7" stroke="#fff" strokeWidth="1.800" /></svg>
        </button>
      </div>
    </header>
  );
}

const MENUS = ["Archivo", "Ver", "Insertar", "Gráficos", "Herramientas", "Ventana", "Ayuda"];
const FRAMES = ["M1", "M5", "M15", "M30", "H1", "H4", "D1", "W1", "MN"];

export default function App() {
  return (
    <div className="flex h-screen flex-col overflow-hidden bg-[#0a35d4] pb-[2px] font-['Open_Sans','Noto_Sans',sans-serif] text-[5px] leading-[8px] text-[#101010]">
      <TitleBar />
      <main className="mx-[3px] flex min-h-0 flex-1 flex-col bg-[#ece9d8]">
        <nav className="flex h-[10px] shrink-0 items-center border-b border-[#d0cdc0] pl-px">
          <svg viewBox="0 0 16 16" className="mr-[3px] size-[8px]"><rect x="1" y="2" width="11" height="8" fill="#fff" stroke="#5a83d8" strokeWidth="2" /><rect x="5" y="7" width="10" height="7" fill="#dce8fc" stroke="#5a83d8" strokeWidth="2" /></svg>
          <div className="flex gap-[8px]">
            {MENUS.map((m) => <button key={m} type="button">{m}</button>)}
          </div>
          <div className="ml-auto flex gap-[5px] pr-px">
            <button type="button" aria-label="Minimizar gráfico"><svg viewBox="0 0 8 8" className="size-[5px]"><path d="M1 6.500h4" stroke="#404040" strokeWidth="2" /></svg></button>
            <button type="button" aria-label="Restaurar gráfico"><svg viewBox="0 0 8 8" className="size-[5px]"><path d="M3 1h4v4M1 3h4v4H1z" fill="none" stroke="#404040" /></svg></button>
            <button type="button" aria-label="Cerrar gráfico"><svg viewBox="0 0 8 8" className="size-[5px]"><path d="M1 1l6 6M7 1L1 7" stroke="#404040" strokeWidth="1.500" /></svg></button>
          </div>
        </nav>

        <ToolBar>
          <Tool name="newChart" menu /><Tool name="profiles" menu />
          <Divider />
          <Tool name="market" on /><Tool name="target" on /><Tool name="navigator" on /><Tool name="terminal" on /><Tool name="tester" />
          <Divider />
          <Tool name="order" label="Nueva orden" /><Tool name="meta" /><Tool name="expert" label="Asesores expertos" />
        </ToolBar>
        <ToolBar>
          <Tool name="bars" /><Tool name="candles" on /><Tool name="line" />
          <Divider />
          <Tool name="zoomIn" /><Tool name="zoomOut" />
          <Divider />
          <Tool name="scroll" /><Tool name="shift" on />
          <Divider />
          <Tool name="indicators" menu /><Tool name="clock" menu /><Tool name="template" menu />
        </ToolBar>
        <ToolBar>
          <Tool name="cursor" on /><Tool name="cross" />
          <Divider />
          <Tool name="vline" /><Tool name="hline" /><Tool name="trend" /><Tool name="channel" /><Tool name="fibo" />
          <Tool name="text" /><Tool name="label" /><Tool name="pitch" /><Tool name="objects" menu />
        </ToolBar>
        <ToolBar>
          {FRAMES.map((f) => (
            <button key={f} type="button" className={f === "H4" ? "h-[11px] w-[14px] border border-[#d4d0bc] bg-[#faf9f4]" : "h-[11px] w-[14px] text-[#58564c]"}>{f}</button>
          ))}
        </ToolBar>

        <div className="flex min-h-0 flex-1">
          <aside className="flex w-[115px] shrink-0 flex-col gap-[4px] pt-px">
            <Navigator />
            <MarketWatch />
            <DataWindow />
          </aside>
          <div className="flex min-w-0 flex-1 flex-col pl-[2px]">
            <Chart />
            <ChartTabs />
          </div>
        </div>

        <Terminal />
        <StatusBar />
      </main>
    </div>
  );
}
